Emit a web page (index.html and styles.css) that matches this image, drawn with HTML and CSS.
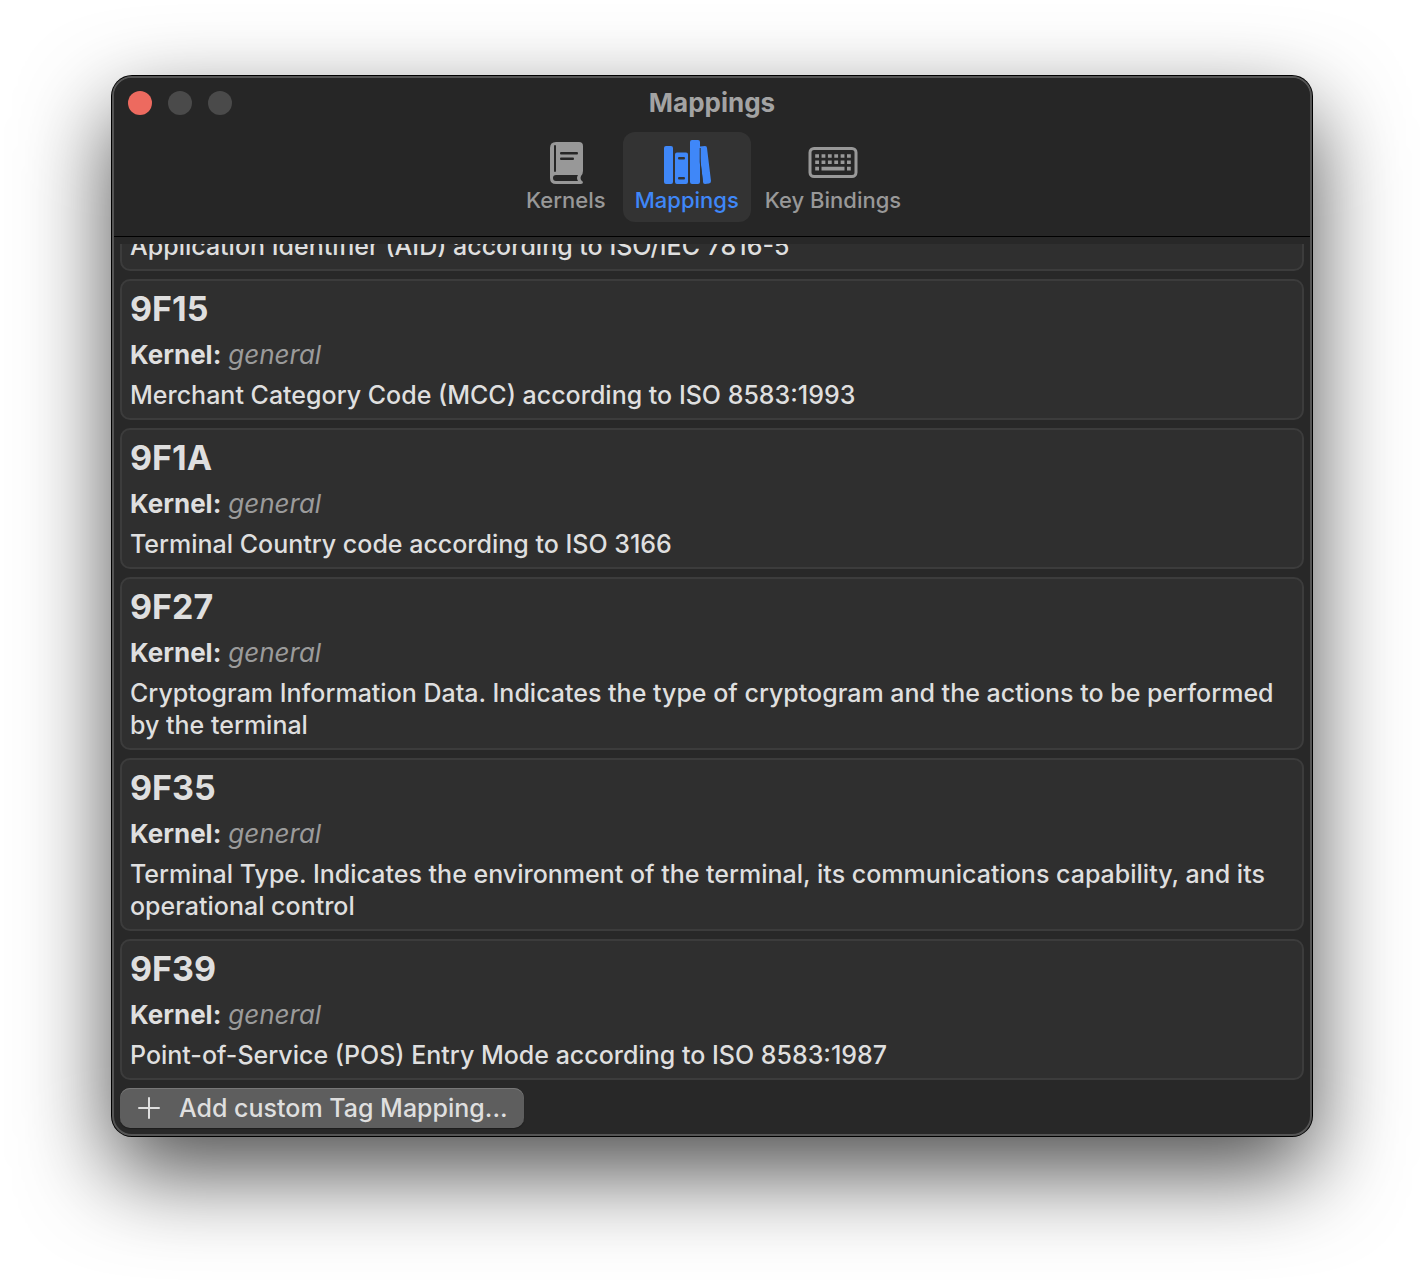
FILE: index.html
```html
<!DOCTYPE html>
<html lang="en">
<head>
<meta charset="utf-8">
<title>Mappings</title>
<link rel="stylesheet" href="styles.css">
</head>
<body>
<main class="window">
  <header class="toolbar">
    <div class="titlebar">
      <div class="controls">
        <button class="control control-close" type="button" aria-label="Close"></button>
        <button class="control" type="button" aria-label="Minimize"></button>
        <button class="control" type="button" aria-label="Zoom"></button>
      </div>
      <h1 class="window-title">Mappings</h1>
    </div>
    <nav class="tabs">
      <button class="tab" type="button">
        <svg class="tab-icon" viewBox="0 0 52 46" aria-hidden="true">
          <path fill="currentColor" fill-rule="evenodd" d="M15 2H33Q37 2 37 6V31Q37 34 35 36Q34 38 35 40L37 42Q37 44 35 44H10Q4 44 4 38V8Q4 2 10 2ZM9 5Q8 5 8 6V31Q8 32 9 32Q10 32 10 31V6Q10 5 9 5ZM10 35Q7 35 7 38Q7 41 10 41H32Q30 38 32 35ZM15 12Q14 12 14 13.300Q14 14.500 15 14.500H31Q32 14.500 32 13.300Q32 12 31 12ZM15 17.500Q14 17.500 14 18.800Q14 20 15 20H27Q28 20 28 18.800Q28 17.500 27 17.500Z" transform="translate(6)"/>
        </svg>
        <span>Kernels</span>
      </button>
      <button class="tab tab-selected" type="button" aria-current="page">
        <svg class="tab-icon" viewBox="0 0 52 46" aria-hidden="true">
          <g fill="currentColor">
            <rect x="3" y="6" width="9" height="38" rx="2"/>
            <path fill-rule="evenodd" d="M16 12.500H25Q27 12.500 27 14.500V42Q27 44 25 44H16Q14 44 14 42V14.500Q14 12.500 16 12.500ZM18 17Q17 17 17 18.200Q17 19.500 18 19.500H23Q24 19.500 24 18.200Q24 17 23 17ZM18 37Q17 37 17 38.200Q17 39.500 18 39.500H23Q24 39.500 24 38.200Q24 37 23 37Z"/>
            <path d="M31 0H37Q39 0 39 2V6.500L44 6Q46 6 46 8L50 41Q50 43 48 43.500L44 44Q42 44 42 42L39 18V42Q39 44 37 44H31Q29 44 29 42V2Q29 0 31 0Z"/>
          </g>
          <path d="M39.200 8V22L41.500 42" fill="none" stroke="#333333" stroke-width="1"/>
        </svg>
        <span>Mappings</span>
      </button>
      <button class="tab" type="button">
        <svg class="tab-icon" viewBox="0 0 52 46" aria-hidden="true">
          <rect x="3" y="8.500" width="46" height="28" rx="4" fill="none" stroke="currentColor" stroke-width="3"/>
          <g stroke="currentColor" stroke-width="3.600">
            <path d="M8.200 16H43.800M8.200 22.300H43.800" stroke-dasharray="3.800 2.560"/>
            <path d="M8.200 28.600H12M14.500 28.600H37.500M40 28.600H43.800"/>
          </g>
        </svg>
        <span>Key Bindings</span>
      </button>
    </nav>
  </header>

  <section class="content">
    <div class="list">
      <article class="card">
        <p class="description">Application Identifier (AID) according to ISO/IEC 7816-5</p>
      </article>
      <article class="card">
        <h2 class="tag">9F15</h2>
        <p class="kernel"><strong>Kernel:</strong> <em>general</em></p>
        <p class="description">Merchant Category Code (MCC) according to ISO 8583:1993</p>
      </article>
      <article class="card">
        <h2 class="tag">9F1A</h2>
        <p class="kernel"><strong>Kernel:</strong> <em>general</em></p>
        <p class="description">Terminal Country code according to ISO 3166</p>
      </article>
      <article class="card">
        <h2 class="tag">9F27</h2>
        <p class="kernel"><strong>Kernel:</strong> <em>general</em></p>
        <p class="description">Cryptogram Information Data. Indicates the type of cryptogram and the actions to be performed by the terminal</p>
      </article>
      <article class="card">
        <h2 class="tag">9F35</h2>
        <p class="kernel"><strong>Kernel:</strong> <em>general</em></p>
        <p class="description">Terminal Type. Indicates the environment of the terminal, its communications capability, and its operational control</p>
      </article>
      <article class="card">
        <h2 class="tag">9F39</h2>
        <p class="kernel"><strong>Kernel:</strong> <em>general</em></p>
        <p class="description">Point-of-Service (POS) Entry Mode according to ISO 8583:1987</p>
      </article>
    </div>
    <button class="add" type="button">
      <svg class="add-icon" viewBox="0 0 22 22" aria-hidden="true"><path d="M11 1V21M1 11H21" fill="none" stroke="currentColor" stroke-width="2" stroke-linecap="round"/></svg>
      <span>Add custom Tag Mapping...</span>
    </button>
  </section>
</main>
</body>
</html>
```
FILE: styles.css
```css
* {
  box-sizing: border-box;
}

body {
  margin: 0;
  padding: 76px 112px 148px;
  height: 100vh;
  background: #ffffff;
  color: #dfdfdf;
  font-family: Inter, "Liberation Sans", sans-serif;
  font-size: 25px;
  font-weight: 500;
  line-height: 32px;
}

h1, h2, p {
  margin: 0;
}

button {
  border: 0;
  padding: 0;
  background: none;
  color: inherit;
  font: inherit;
}

.window {
  display: flex;
  flex-direction: column;
  height: 100%;
  overflow: hidden;
  border: 2px solid #555555;
  border-radius: 20px;
  background: #282828;
  box-shadow: 0 0 0 1px #000000, 0 36px 90px rgba(0, 0, 0, 0.7);
}

.toolbar {
  flex: none;
  padding: 9px 14px 14px;
  border-bottom: 1px solid #000000;
  background: #262626;
}

.titlebar {
  display: grid;
  grid-template-columns: 1fr auto 1fr;
  align-items: center;
}

.controls {
  display: flex;
  gap: 16px;
}

.control {
  width: 24px;
  height: 24px;
  border-radius: 50%;
  background: #4a4a4a;
}

.control-close {
  background: #ed6a5f;
}

.window-title {
  color: #a3a3a3;
  font-size: 26px;
  font-weight: 700;
}

.tabs {
  display: flex;
  justify-content: center;
  gap: 2px;
  padding-top: 13px;
}

.tab {
  display: flex;
  flex-direction: column;
  align-items: center;
  min-width: 110px;
  height: 90px;
  padding: 8px 12px;
  border-radius: 12px;
  color: #989898;
  font-size: 22px;
}

.tab-selected {
  background: #333333;
  color: #3f87f8;
}

.tab-icon {
  width: 52px;
  height: 46px;
}

.tab span {
  line-height: 28px;
}

.content {
  display: flex;
  flex: 1;
  flex-direction: column;
  gap: 8px;
  min-height: 0;
  padding: 7px 6px 6px;
}

.list {
  display: flex;
  flex: 1;
  flex-direction: column;
  justify-content: flex-end;
  gap: 8px;
  min-height: 0;
  overflow: hidden;
}

.card {
  display: flex;
  flex: none;
  flex-direction: column;
  gap: 8px;
  padding: 7px 8px;
  border: 2px solid #3c3c3c;
  border-radius: 10px;
  background: #2f2f2f;
}

.tag {
  margin-bottom: 2px;
  font-size: 34px;
  font-weight: 700;
  line-height: 41px;
}

.kernel {
  font-size: 26px;
}

.kernel em {
  color: #9b9b9b;
  font-weight: 400;
}

.add {
  display: flex;
  align-items: center;
  align-self: flex-start;
  flex: none;
  gap: 19px;
  height: 40px;
  padding: 0 16px 0 18px;
  border-radius: 10px;
  background: #5e5e5e;
  box-shadow: inset 0 1px #777777, 0 1px 1px #1c1c1c;
}

.add-icon {
  width: 22px;
  height: 22px;
}
```
